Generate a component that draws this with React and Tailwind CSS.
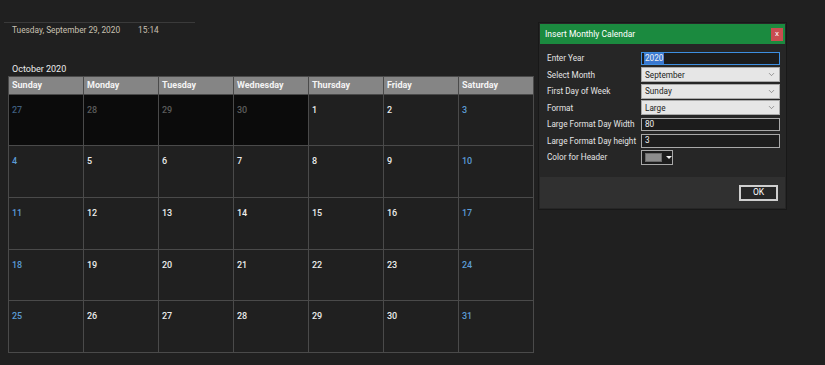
import { ChevronDown } from "lucide-react"

const FONT = { fontFamily: 'Roboto, "Noto Sans", sans-serif' }

const DAYS = ["Sunday", "Monday", "Tuesday", "Wednesday", "Thursday", "Friday", "Saturday"]

const WEEKS = [
  [27, 28, 29, 30, 1, 2, 3],
  [4, 5, 6, 7, 8, 9, 10],
  [11, 12, 13, 14, 15, 16, 17],
  [18, 19, 20, 21, 22, 23, 24],
  [25, 26, 27, 28, 29, 30, 31],
]

function DayCell({ day, col, outside }) {
  const weekend = col === 0 || col === 6
  let color = weekend ? "text-[#5b9bd5]" : "text-[#ececec]"
  if (outside) color = weekend ? "text-[#3f5f80]" : "text-[#5c5c5c]"
  return (
    <div className={`${outside ? "bg-[#0b0b0b]" : "bg-[#202020]"} pl-[3px] pt-px`}>
      <span className={`text-[9px] font-medium leading-[12px] ${color}`}>{day}</span>
    </div>
  )
}

function Calendar() {
  return (
    <div className="ml-2 w-fit bg-[#4a4a4a] p-px">
      <div className="grid grid-cols-[repeat(7,74px)] grid-rows-[17px_50px_51px_51px_50px_51px] gap-px">
        {DAYS.map((d) => (
          <div key={d} className="flex items-center bg-[#858585] pl-[3px]">
            <span className="text-[9px] font-bold text-[#f4f4f4]">{d}</span>
          </div>
        ))}
        {WEEKS.map((week, r) =>
          week.map((day, c) => (
            <DayCell key={`${r}-${c}`} day={day} col={c} outside={r === 0 && c < 4} />
          ))
        )}
      </div>
    </div>
  )
}

function Row({ label, children }) {
  return (
    <div className="flex h-[16.5px] items-center">
      <span className="w-[94px] whitespace-nowrap text-[8.2px] text-[#e4e4e4]">{label}</span>
      {children}
    </div>
  )
}

function SelectBox({ value }) {
  return (
    <div className="flex h-[15px] w-[139px] items-center justify-between border border-[#a9a9a9] bg-[#e6e6e6] pl-[3px] pr-[3px]">
      <span className="text-[8.2px] text-[#1c1c1c]">{value}</span>
      <ChevronDown size={9} strokeWidth={1.5} className="text-[#5a5a5a]" />
    </div>
  )
}

function TextBox({ value, focused }) {
  return (
    <div
      className={`flex h-[13.5px] w-[139px] items-center border bg-[#1c1c1c] pl-[2px] ${
        focused ? "border-[#3d8ee0]" : "border-[#a8a8a8]"
      }`}
    >
      <span
        className={`text-[8.2px] leading-[11px] text-[#f0f0f0] ${focused ? "bg-[#3a78d0] px-px" : "pl-px"}`}
      >
        {value}
      </span>
    </div>
  )
}

function Dialog() {
  return (
    <div className="absolute left-[538px] top-[22px] flex h-[188px] w-[249px] flex-col border border-[#181818] bg-[#262626] p-px">
      <div className="flex h-[20px] items-center justify-between bg-[#1b8a3f] pl-[5px] pr-[2px]">
        <span className="text-[8.5px] text-white">Insert Monthly Calendar</span>
        <div className="flex h-[13px] w-[12px] items-center justify-center bg-[#c94d50]">
          <span className="text-[8px] leading-none text-white">x</span>
        </div>
      </div>
      <div className="flex flex-col pl-[7px] pt-[6px]">
        <Row label="Enter Year">
          <TextBox value="2020" focused />
        </Row>
        <Row label="Select Month">
          <SelectBox value="September" />
        </Row>
        <Row label="First Day of Week">
          <SelectBox value="Sunday" />
        </Row>
        <Row label="Format">
          <SelectBox value="Large" />
        </Row>
        <Row label="Large Format Day Width">
          <TextBox value="80" />
        </Row>
        <Row label="Large Format Day height">
          <TextBox value="3" />
        </Row>
        <Row label="Color for Header">
          <div className="flex h-[15px] w-[32px] items-center gap-[4px] border border-[#a8a8a8] bg-[#1c1c1c] pl-[3px]">
            <div className="h-[9px] w-[17px] border border-[#6a6a6a] bg-[#8c8c8c]" />
            <span className="h-0 w-0 border-x-[3px] border-t-[3px] border-x-transparent border-t-[#f0f0f0]" />
          </div>
        </Row>
      </div>
      <div className="mt-auto flex h-[31px] items-center justify-end bg-[#303030] pr-[7px]">
        <div className="flex h-[16px] w-[39px] items-center justify-center border-2 border-[#cfcfcf] bg-[#262626]">
          <span className="text-[8.5px] text-white">OK</span>
        </div>
      </div>
    </div>
  )
}

export default function App() {
  return (
    <div className="relative h-[365px] w-[825px] overflow-hidden bg-[#202020]" style={FONT}>
      <div className="pt-[22px]">
        <div className="ml-1 w-[191px] border-t border-[#3a3a3a]">
          <div className="flex h-[13px] items-center gap-[18px] pl-2 pt-px text-[8.3px] text-[#c9c1b2]">
            <span>Tuesday, September 29, 2020</span>
            <span>15:14</span>
          </div>
        </div>
      </div>
      <div className="mt-[26px] h-[14px] pl-3 text-[9px] leading-[14px] text-[#ececec]">October 2020</div>
      <Calendar />
      <Dialog />
    </div>
  )
}
